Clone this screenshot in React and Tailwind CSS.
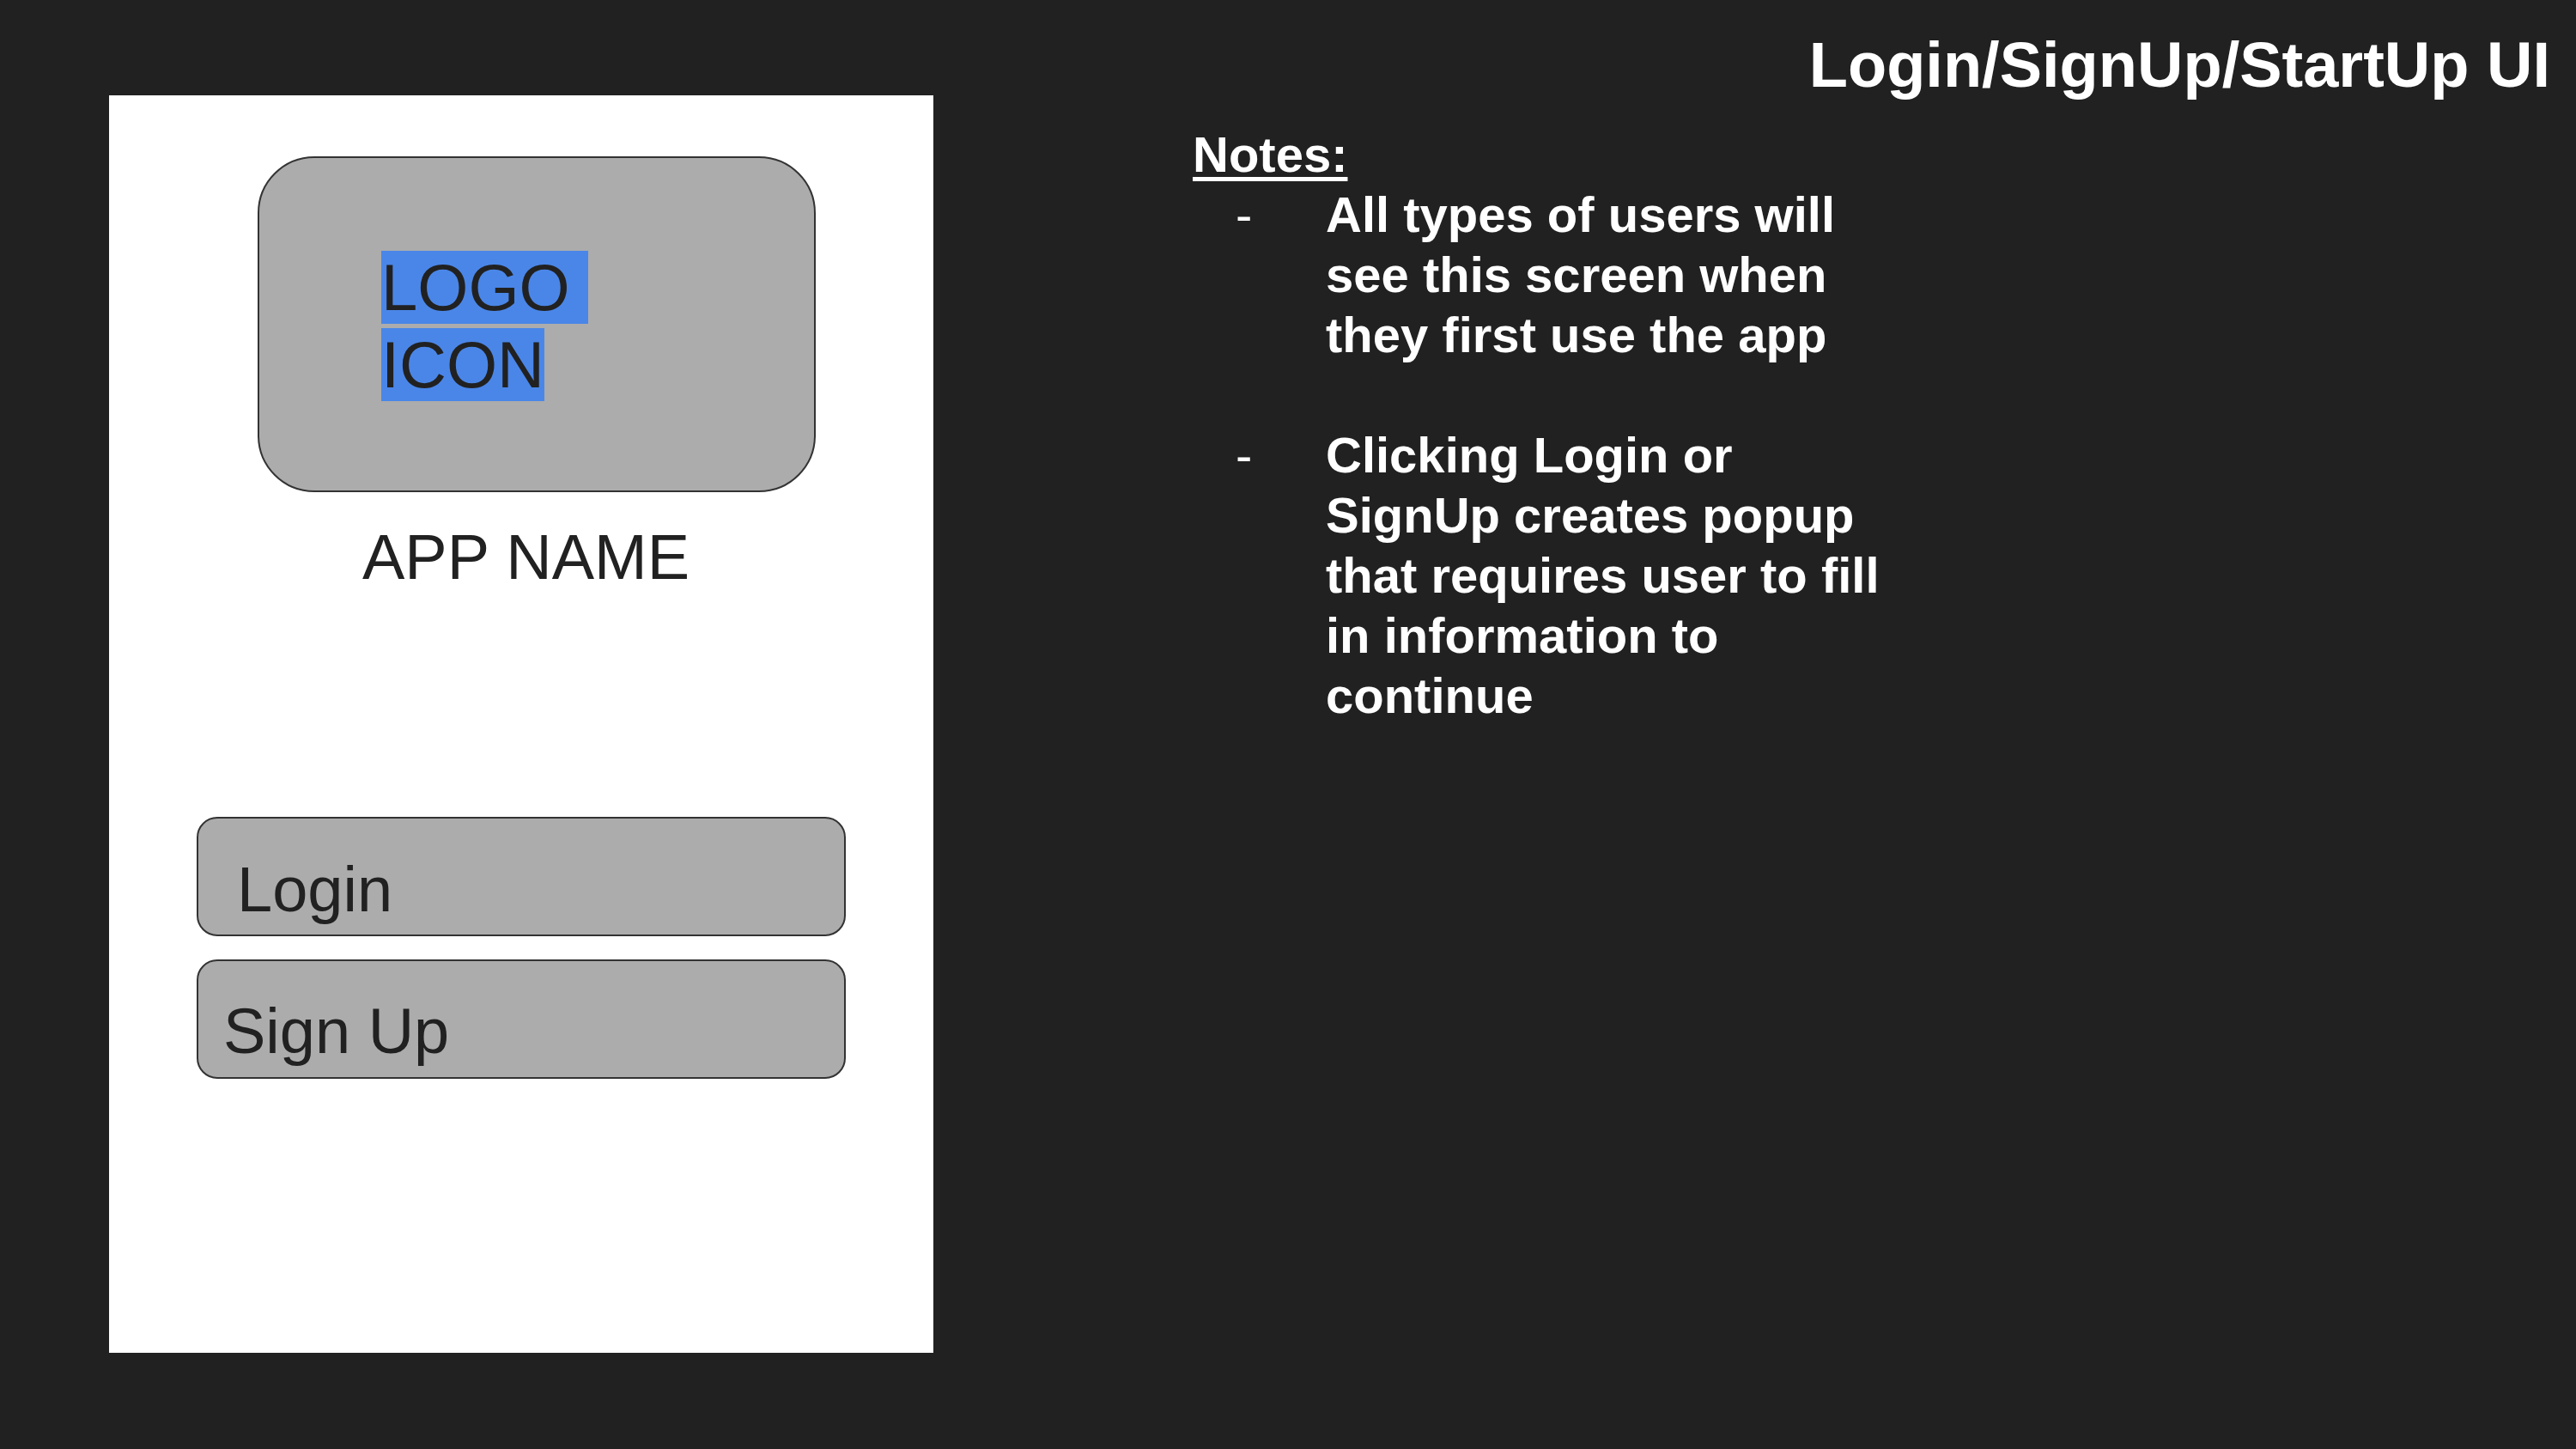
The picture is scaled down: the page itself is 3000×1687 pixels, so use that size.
import React from 'react';

const notes = [
  ['All types of users will', 'see this screen when', 'they first use the app'],
  ['Clicking Login or', 'SignUp creates popup', 'that requires user to fill', 'in information to', 'continue'],
];

function MenuButton({ label, pad }) {
  return (
    <div
      className={`w-[756px] h-[139px] rounded-[24px] border-2 border-[#333333] bg-[#acacac] text-[74px] leading-[85px] text-[#212121] ${pad}`}
    >
      {label}
    </div>
  );
}

function PhoneMock() {
  return (
    <div className="ml-[127px] mt-[111px] w-[960px] h-[1464px] bg-white flex flex-col shrink-0">
      <div className="ml-[173px] mt-[71px] w-[650px] h-[391px] rounded-[66px] border-2 border-[#333333] bg-[#acacac] pl-[142px] pt-[106px]">
        <div className="text-[76px] leading-[90px] text-[#212121]">
          <span className="bg-[#4a86e8] whitespace-pre">LOGO </span>
          <br />
          <span className="bg-[#4a86e8]">ICON</span>
        </div>
      </div>
      <div className="mt-[33px] pl-[295px] text-[74px] leading-[85px] text-[#212121]">APP NAME</div>
      <div className="ml-[102px] mt-[260px] flex flex-col gap-[27px]">
        <MenuButton label="Login" pad="pl-[45px] pt-[40px]" />
        <MenuButton label="Sign Up" pad="pl-[29px] pt-[39px]" />
      </div>
    </div>
  );
}

export default function App() {
  return (
    <div className="w-[3000px] h-[1687px] bg-[#212121] flex font-['Liberation_Sans',Arial,sans-serif] overflow-hidden">
      <PhoneMock />
      <div className="flex-1 flex flex-col">
        <h1 className="pt-[33px] pr-[30px] text-right text-[74px] leading-[86px] font-bold text-white">
          Login/SignUp/StartUp UI
        </h1>
        <div className="ml-[302px] mt-[26px] text-white text-[58px] leading-[70px] font-bold">
          <div className="underline decoration-[5px] underline-offset-[6px]">Notes:</div>
          {notes.map((lines, i) => (
            <div key={i} className={`flex ${i > 0 ? 'mt-[70px]' : ''}`}>
              <span className="w-[105px] pl-[50px] shrink-0 font-normal box-content">-</span>
              <div className="whitespace-nowrap">
                {lines.map((l, j) => (
                  <React.Fragment key={j}>
                    {l}
                    {j < lines.length - 1 && <br />}
                  </React.Fragment>
                ))}
              </div>
            </div>
          ))}
        </div>
      </div>
    </div>
  );
}
